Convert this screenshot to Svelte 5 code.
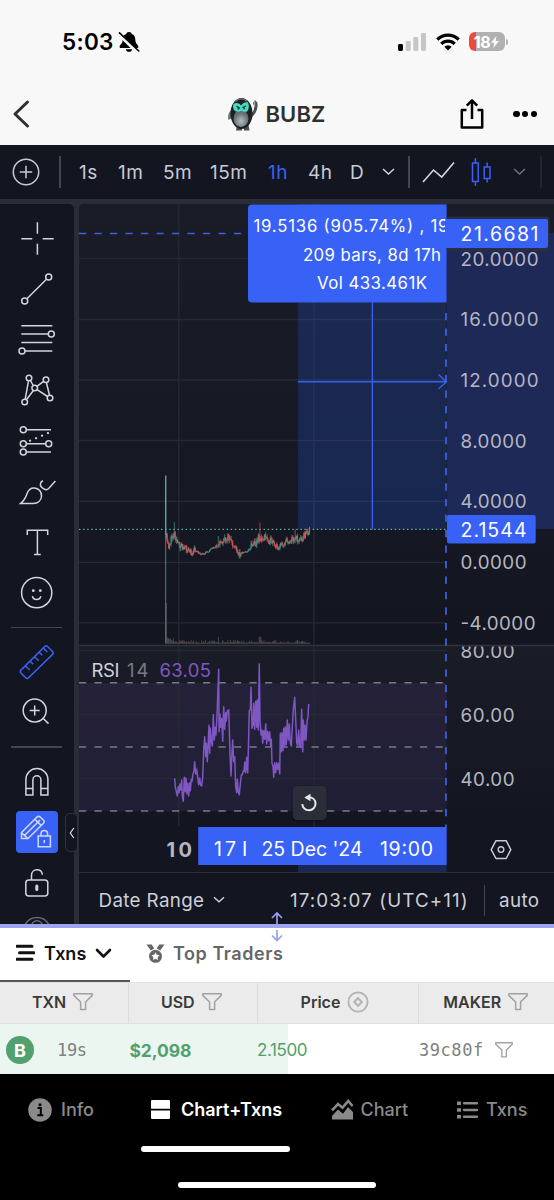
<script>
  const intervals = ['1s', '1m', '5m', '15m', '1h', '4h', 'D'];

  const priceLabels = [
    { t: '20.0000', y: 265.6, w: 77 },
    { t: '16.0000', y: 326.4, w: 77 },
    { t: '12.0000', y: 387.3, w: 77 },
    { t: '8.0000', y: 447.6, w: 65 },
    { t: '4.0000', y: 508.3, w: 65 },
    { t: '0.0000', y: 569.1, w: 65 },
    { t: '-4.0000', y: 629.8, w: 74 }
  ];
  const rsiLabels = [
    { t: '80.00', y: 657.7 },
    { t: '60.00', y: 721.9 },
    { t: '40.00', y: 786 }
  ];
  const priceGrid = [258.5, 319.5, 380, 440.5, 501.3, 562.3, 622.8];
  const rsiGrid = [650.5, 714.7, 778.7];
  const rsiBands = [682.8, 747, 811];

  // price outline, thirds of a pixel from the chart origin (150, 460)
  const keys = [
    [48, 228], [55, 262], [60, 248], [66, 232], [73, 218], [80, 240], [85, 255], [95, 256], [100, 266],
    [112, 268], [120, 278], [135, 272], [150, 282], [165, 280], [180, 270], [195, 262], [205, 247],
    [215, 248], [225, 240], [237, 230], [245, 255], [255, 260], [262, 283], [275, 279], [295, 272],
    [305, 252], [318, 248], [325, 234], [335, 240], [345, 230], [355, 240], [365, 245], [375, 262],
    [390, 258], [405, 245], [420, 242], [436, 232], [445, 240], [455, 235], [463, 225], [470, 220], [478, 210]
  ];
  let seed = 11;
  const rnd = () => (seed = (seed * 16807) % 2147483647) / 2147483647;
  const at = (x) => {
    let i = 1;
    while (i < keys.length - 1 && keys[i][0] < x) i++;
    const [x0, y0] = keys[i - 1];
    const [x1, y1] = keys[i];
    return y0 + ((y1 - y0) * (x - x0)) / (x1 - x0);
  };
  const candles = [];
  const volumes = [];
  let prev = at(49);
  for (let x = 49; x < 479; x += 2.4) {
    const calm = (x > 135 && x < 200) || (x > 270 && x < 300);
    const amp = calm ? 6 : 20;
    const next = at(x) + (rnd() - 0.5) * amp;
    const up = next < prev;
    let hi = Math.min(prev, next) - rnd() * amp * 0.5;
    const lo = Math.max(prev, next) + rnd() * amp * 0.5;
    let spike = false;
    if (Math.abs(x - 73) < 1.2) hi = 187;
    if (Math.abs(x - 330) < 1.3) { hi = 188; spike = true; }
    if (Math.abs(x - 206) < 1.3) hi = 228;
    if (Math.abs(x - 436) < 1.3) { hi = 208; spike = true; }
    candles.push({
      x: 150 + x / 3, hi: 460 + hi / 3, lo: 460 + lo / 3,
      top: 460 + Math.min(prev, next) / 3, h: Math.max(0.8, Math.abs(next - prev) / 3),
      c: up && !spike ? '#459c86' : '#e84f5a'
    });
    let v = 0.8 + rnd() * rnd() * 4;
    if (x < 80) v += (80 - x) / 6;
    if (Math.abs(x - 206) < 1.3) v = 7;
    if (Math.abs(x - 330) < 3) v = 7;
    volumes.push({ x: 150 + x / 3, v, c: up ? '#3d5553' : '#6b464c' });
    prev = next;
  }

  const rsi = [
    74,415,76,440,79,455,82,468,85,440,87,458,90,432,92,450,95,420,97,468,100,484,103,412,106,455,108,414,111,462,
    113,430,116,468,119,428,121,452,124,418,126,424,129,402,132,392,134,365,137,402,140,388,143,412,146,434,149,414,
    152,436,155,438,158,412,161,330,164,290,167,350,169,310,172,365,174,318,177,256,179,340,181,264,184,305,187,318,
    190,224,193,300,196,262,198,285,201,225,204,145,206,88,207,275,210,222,212,262,215,235,218,304,221,200,224,268,
    227,218,229,244,232,214,236,209,238,262,240,345,243,408,246,335,248,300,251,365,254,350,257,440,260,458,262,418,
    265,455,268,464,271,432,274,405,277,404,280,392,282,395,284,366,287,398,290,352,293,398,296,290,298,212,301,210,
    303,142,306,265,309,255,311,190,314,268,317,184,320,262,322,180,325,270,328,72,330,240,333,285,336,270,338,310,
    341,272,344,298,347,252,350,312,353,274,356,302,359,275,362,322,364,298,366,370,369,378,371,412,374,368,377,398,
    380,368,383,388,386,370,389,402,391,280,394,335,396,278,399,332,401,265,404,322,406,260,409,314,412,240,415,300,
    418,252,421,310,424,318,427,262,430,210,434,172,437,240,440,308,443,318,446,270,449,318,452,320,455,208,458,335,
    460,240,463,300,465,256,468,300,471,245,474,230,476,192
  ];
  let rsiPath = '';
  for (let i = 0; i < rsi.length; i += 2) {
    rsiPath += `${i ? 'L' : 'M'}${(150 + rsi[i] / 3).toFixed(1)} ${(640 + rsi[i + 1] / 3).toFixed(1)}`;
  }
</script>

{#snippet funnel(size)}
  <svg class="funnel" width={size} height={size * 0.87} viewBox="0 0 20 17.4">
    <path d="M.8 .8h18.4v1.6L12.6 9v7.6H7.6V9L.8 2.4z" />
  </svg>
{/snippet}

<div class="phone">
  <div class="status">
    <span class="time">5:03</span>
    <svg class="bell" width="22" height="22" viewBox="0 0 22 22">
      <path d="M11 .9c-1.500 0-2.600.9-2.800 2.200C5.200 4.200 4.600 7 4.600 9.500c0 3.300-3 4.200-3 6.300 0 .8.500 1.200 1.300 1.200h16.200c.8 0 1.300-.4 1.300-1.200 0-2.100-3-3-3-6.300 0-2.500-.6-5.300-3.600-6.400C13.600 1.800 12.500.9 11 .9z" />
      <path d="M7.800 18.200h6.400c-.3 1.600-1.600 2.600-3.200 2.600s-2.900-1-3.200-2.600z" />
      <path d="M.9 3 19 20.800" stroke="#f8f8f8" stroke-width="3.600" />
      <path d="M1.500 1.800 20.800 20" stroke="#000" stroke-width="1.600" stroke-linecap="round" />
    </svg>
    <span class="grow"></span>
    <svg width="29" height="20" viewBox="0 0 29 20">
      <rect x="0" y="12" width="5" height="7" rx="1.400" />
      <g fill="#c6c6c6">
        <rect x="7.700" y="9" width="5" height="10" rx="1.400" />
        <rect x="15.300" y="5" width="5" height="14" rx="1.400" />
        <rect x="23" y="1" width="5" height="18" rx="1.400" />
      </g>
    </svg>
    <svg class="wifi" width="24" height="18" viewBox="0 0 24 18">
      <g fill="none" stroke="#000" stroke-width="3.200">
        <path d="M1.300 6.600a15.200 15.200 0 0 1 21.400 0" />
        <path d="M5.300 10.800a9.500 9.500 0 0 1 13.400 0" />
      </g>
      <path d="M8.300 13.700a5.300 5.300 0 0 1 7.400 0L12 17.400z" />
    </svg>
    <div class="battery"><span>18</span><svg width="8" height="12" viewBox="0 0 8 12"><path fill="#fff" d="M5.500 0 0 6.800h3.300L2.300 12 8 5H4.600z" /></svg></div>
    <i class="nub"></i>
  </div>

  <header>
    <svg width="20" height="30" viewBox="0 0 20 30"><path d="M15.500 3 3 15l12.500 12" fill="none" stroke="#303030" stroke-width="3" stroke-linecap="round" stroke-linejoin="round" /></svg>
    <div class="token">
      <svg width="33" height="36" viewBox="0 0 33 36">
        <defs><radialGradient id="belly" cx=".5" cy=".65"><stop offset="0" stop-color="#b4bcbd" /><stop offset="1" stop-color="#626c6f" /></radialGradient></defs>
        <path d="M23 19c4-2 5.500-5 5-9l-1-3 2-3 2.300 2.500c1 5-.8 11.500-6.300 15z" fill="#4a4f51" />
        <path d="M28.700 5v6" stroke="#b5b8b8" stroke-width="1" />
        <path d="M5.500 14c-3 2-4 6-3 10l3.500-2z" fill="#6c7172" />
        <path d="M11 29h5v5.500h-6zM18 29h4.500l1 5.500h-5.500z" fill="#4b5052" />
        <ellipse cx="15.500" cy="17.500" rx="11" ry="15.500" fill="#1d2123" />
        <path d="M9.500 5.500c3-3.500 8.500-3.500 11.500 0" stroke="#6d7273" stroke-width="1.300" fill="none" />
        <ellipse cx="15" cy="22.500" rx="7.500" ry="8.500" fill="url(#belly)" />
        <path d="M7.500 8c2.500-1.500 5-1.500 7.500 1.500C17 6.500 20 5.500 22 6.500c1.500 3 1 7-1 9-2.500.6-4-.3-6-.8-2 1.300-4 1.300-6 .3C7.300 13.500 6.500 11 7.500 8z" fill="#4adbc5" />
        <path d="m10.500 10.300 3.500 2M20 9.800l-3.500 2M11.500 12.800h1.500M17.500 12.500H19" stroke="#12302e" stroke-width="1.300" />
      </svg>
      <b>BUBZ</b>
    </div>
    <svg class="share" width="26" height="34" viewBox="0 0 26 34"><path d="M7.500 13H2.800v17.500h20.400V13h-4.700M13 22V4M7.800 8.700 13 3.300l5.200 5.400" fill="none" stroke="#000" stroke-width="2.500" stroke-linejoin="round" /></svg>
    <div class="more"><i></i><i></i><i></i></div>
  </header>

  <div class="toolbar">
    <svg width="28" height="28" viewBox="0 0 28 28"><g fill="none" stroke="#c8cad3" stroke-width="1.500"><circle cx="14" cy="14" r="12.700" /><path d="M14 7.800v12.400M7.800 14h12.400" /></g></svg>
    <i class="sep"></i>
    {#each intervals as it}<span class:on={it === '1h'}>{it}</span>{/each}
    <svg width="13" height="8" viewBox="0 0 13 8"><path d="m1 1 5.500 5L12 1" fill="none" stroke="#d5d6de" stroke-width="1.500" /></svg>
    <i class="sep"></i>
    <svg width="33" height="22" viewBox="0 0 33 22"><path d="m1 21 10.500-12 8.200 7L32 1.500" fill="none" stroke="#d5d6de" stroke-width="1.600" /></svg>
    <svg width="21" height="30" viewBox="0 0 21 30"><g fill="none" stroke="#3a60f5" stroke-width="1.500"><path d="M1.500 6h5.700v18.500H1.500zM4.400 1v5M4.400 24.500V29M13.200 10h5.800v11.500h-5.800zM16.100 5.500V10M16.100 21.500v4" /></g></svg>
    <svg width="13" height="8" viewBox="0 0 13 8"><path d="m1 1 5.500 5L12 1" fill="none" stroke="#70737f" stroke-width="1.500" /></svg>
    <i class="sep dim"></i>
  </div>

  <div class="workspace">
    <nav class="tools">
      <div class="slot"><svg viewBox="0 0 44 44"><path d="M6.300 21.700h11M27.700 21.700h11M22.400 5.300v11.400M22.400 26.700v11" /></svg></div>
      <div class="slot"><svg viewBox="0 0 44 44"><circle cx="9.700" cy="33" r="3" /><circle cx="33.700" cy="9" r="3" /><path d="m11.900 30.800 19.600-19.600" /></svg></div>
      <div class="slot"><svg viewBox="0 0 44 44"><path d="M6.300 7.700h31M6.300 16h27M6.300 24.400h31M10 33h27.300" /><circle cx="36.300" cy="16" r="3" /><circle cx="7" cy="33" r="3" /></svg></div>
      <div class="slot"><svg viewBox="0 0 44 44"><g><circle cx="14" cy="9" r="2.800" /><circle cx="31" cy="10.700" r="2.800" /><circle cx="19.700" cy="19" r="2.800" /><circle cx="9.700" cy="33" r="2.800" /><circle cx="35" cy="29" r="2.800" /></g><path d="m13.500 11.800-3.300 18.400M15.400 11.500l2.800 5M21.900 17.300l6.700-4.900M18.400 21.500l-7 9.300M22 20.600l10.600 6.900M31.400 13.500l3.100 12.700" /></svg></div>
      <div class="slot"><svg viewBox="0 0 44 44"><circle cx="8.300" cy="10.700" r="3" /><circle cx="8.300" cy="24.700" r="3" /><circle cx="33.700" cy="24.700" r="3" /><circle cx="8.300" cy="33.100" r="3" /><path d="M11.300 10.700H36M11.300 24.700h19.400M11.300 33.100H36" /><path d="m15 21.700 19-8" stroke-dasharray="0.100 6.400" stroke-linecap="round" stroke-width="2.200" /></svg></div>
      <div class="slot"><svg viewBox="0 0 44 44"><path d="M5.700 33.400c4-3 5.300-6.500 6.600-10.300 1.300-3.500 4-5.300 7.100-5.100 4.300.3 7.400 3.800 7.100 8.200-.3 4.300-3.500 7.200-8.300 7.200zM28 10.700c-3 1.200-3.300 4.300-1.600 6.300 2.300 2.700 5.300 3.600 7.300 1.500l6.700-7.500" /></svg></div>
      <div class="slot"><svg viewBox="0 0 44 44"><path d="M12.300 14V9.300h20.400V14M22.400 9.300v24M19 33.600h6.800" /></svg></div>
      <div class="slot"><svg viewBox="0 0 44 44"><circle cx="21.700" cy="21.700" r="15.100" /><path d="M17.500 25.100c.4 4.400 7.800 4.400 8.200 0" /><g class="solid"><circle cx="18.300" cy="19.700" r="1.400" /><circle cx="25.300" cy="19.700" r="1.400" /></g></svg></div>
      <hr />
      <div class="slot blue"><svg viewBox="0 0 44 44"><path d="M30 6.300a1.600 1.600 0 0 1 2.300 0l5.500 5.500a1.600 1.600 0 0 1 0 2.300L13.300 38a1.600 1.600 0 0 1-2.300 0l-5.300-5.300a1.600 1.600 0 0 1 0-2.300zM10.500 26l4.200 4M15.200 21.200l3 3M19.500 16.800l4.200 4M24.200 12.200l3 3M28.300 8l4 4" /></svg></div>
      <div class="slot"><svg viewBox="0 0 44 44"><circle cx="19.700" cy="20.500" r="11.500" /><path d="M19.700 15.500v10M14.700 20.500h10M28 28.300l5.500 5.300" /></svg></div>
      <hr class="second" />
      <div class="slot"><svg viewBox="0 0 44 44"><path d="M10.900 35V19.500a11 11 0 0 1 22 0V35h-7V19.800a4 4 0 0 0-8 0V35zM10.900 28.600h7M25.900 28.600h7" /></svg></div>
      <div class="slot"><div class="active"><svg viewBox="0 0 42 42"><path d="M5.500 27.500v-6L21 6c1-1 2.200-1 3.200 0l3.300 3.300c1 1 1 2 0 3L12 27.500zM5.500 21.700l6.300 5.700M8.500 24.500 24 9M18.800 8.200l6.300 6.200M22.200 25h12.200v10.800H22.200zM25 25v-2.200a3.300 3.300 0 0 1 6.600 0V25M28.300 29v3" /></svg></div></div>
      <div class="slot"><svg viewBox="0 0 44 44"><rect x="10.800" y="18.900" width="22" height="16" rx="3" /><path d="M16.500 18.900v-4.500c0-7.400 10.800-7.400 10.800-.7" /><path d="M21.800 25v3.600" stroke-width="3" stroke-linecap="round" /></svg></div>
      <div class="slot dimmed"><svg viewBox="0 0 44 44"><path d="M9.500 15c5-11.500 20-11.500 25 0" /><circle cx="22" cy="15" r="5.300" /></svg></div>
      <div class="collapse"><svg width="6" height="12" viewBox="0 0 6 12"><path d="M4.800 1 1.300 6l3.500 5" fill="none" stroke="#d5d6de" stroke-width="1.300" /></svg></div>
    </nav>

    <div class="chart">
      <svg class="plot" width="475" height="668" viewBox="79 204 475 668">
        <defs>
          <linearGradient id="pane" x1="0" y1="0" x2="0" y2="1"><stop offset="0" stop-color="#1a1c27" /><stop offset="1" stop-color="#131621" /></linearGradient>
          <clipPath id="tip"><rect x="248" y="204" width="198.600" height="99" /></clipPath>
          <clipPath id="rsiAxis"><rect x="447" y="646.500" width="107" height="180" /></clipPath>
        </defs>
        <rect x="79" y="204" width="475" height="668" fill="#131621" />
        <rect x="79" y="204" width="475" height="442" fill="url(#pane)" />
        <rect x="79" y="646" width="475" height="180" fill="url(#pane)" />
        <rect x="79" y="683" width="367.500" height="128" fill="#7e57c2" fill-opacity=".12" />
        <g stroke="#272a34" stroke-width="1.300">
          {#each [...priceGrid, ...rsiGrid] as y}<path d="M79 {y}H446" />{/each}
          <path d="M178.800 204V826M314 204V826" />
        </g>
        <path d="M79 645.500H554" stroke="#30323d" stroke-width="1.500" />
        <rect x="298" y="204" width="148.500" height="325.500" fill="#2962ff" fill-opacity=".2" />
        <rect x="447" y="233" width="107" height="296" fill="#1e2958" />
        {#each volumes as v}<rect x={v.x - 0.4} y={643.8 - v.v} width=".8" height={v.v} fill={v.c} />{/each}
        <path d="M166.200 603V644" stroke="#5d5054" stroke-width="1.200" />
        <path d="M79 529.300H446" stroke="#5fae9f" stroke-width="1.300" stroke-dasharray="1.500 2.600" />
        <path d="M165.700 475.500V535" stroke="#4db096" stroke-width="1.400" />
        <path d="M165.600 535V643" stroke="#3a7568" stroke-width="1.200" />
        {#each candles as c}
          <path d="M{c.x} {c.hi}V{c.lo}" stroke={c.c} stroke-width=".7" />
          <rect x={c.x - 0.5} y={c.top} width="1" height={c.h} fill={c.c} />
        {/each}
        {#each rsiBands as y}<path d="M79 {y}H446" stroke="#787a84" stroke-width="1.500" stroke-dasharray="7.200 8.300" />{/each}
        <path d={rsiPath} fill="none" stroke="#7e57c2" stroke-width="1.500" stroke-linejoin="round" />
        <path d="M79 233.500H248" stroke="#3b5fe6" stroke-width="1.500" stroke-dasharray="7.200 8.300" />
        <path d="M446 313V827" stroke="#3e63e8" stroke-width="1.700" stroke-dasharray="7.200 8.300" />
        <g fill="none" stroke="#3560f2" stroke-width="1.400"><path d="M298 381.800H446M372.400 302V529.500M438.500 374.500l8 7.300-8 7.300" /></g>

        <g class="axis">
          {#each priceLabels as p}<text x="460.500" y={p.y} textLength={p.w + 1}>{p.t}</text>{/each}
          <g clip-path="url(#rsiAxis)">{#each rsiLabels as p}<text x="460.500" y={p.y} textLength="54">{p.t}</text>{/each}</g>
        </g>

        <g clip-path="url(#tip)" class="tip">
          <rect x="248" y="204.500" width="210" height="98" rx="4" fill="#3861f6" />
          <text x="253.500" y="232.300" textLength="195">19.5136 (905.74%) , 19</text>
          <text x="303" y="260.500" textLength="138">209 bars, 8d 17h</text>
          <text x="317" y="288.600" textLength="110">Vol 433.461K</text>
        </g>
        <rect x="446.500" y="216.500" width="103" height="34.500" rx="3" fill="#2c2f3e" opacity=".8" />
        <rect x="445" y="219" width="103" height="29" rx="2" fill="#3861f6" />
        <rect x="447" y="515" width="88.700" height="28.500" rx="2" fill="#3861f6" />
        <g class="tag">
          <text x="460.500" y="241" textLength="78">21.6681</text>
          <text x="460.500" y="537" textLength="66">2.1544</text>
        </g>

        <g class="legend">
          <text x="91.500" y="677.400" textLength="28" fill="#d1d3dc">RSI</text>
          <text x="127" y="677.400" textLength="21.500" fill="#787b86">14</text>
          <text x="159.500" y="677.400" textLength="51.500" fill="#7e57c2">63.05</text>
        </g>

        <g>
          <rect x="291.500" y="785.500" width="36" height="37" rx="6" fill="#000" opacity=".2" />
          <rect x="292.700" y="786" width="34" height="34" rx="4.500" fill="#2b2d38" />
          <path d="M308.500 797.300c4 0 7 2.600 7 6.300a6.600 6.600 0 0 1-13.200.3" fill="none" stroke="#e6e7ec" stroke-width="2" />
          <path d="m304.300 797.500 6.200-3.700v7.400z" fill="#e6e7ec" />
        </g>

        <rect x="298" y="864" width="148.500" height="8" fill="#1c2755" />
        <text class="day" x="166.500" y="857" textLength="25.500">10</text>
        <rect x="198.200" y="827" width="248.500" height="38" fill="#3861f6" />
        <g class="date">
          <text x="214" y="856" textLength="22">17</text>
          <text x="242" y="856">I</text>
          <text x="261.500" y="856" textLength="101">25 Dec '24</text>
          <text x="380" y="856" textLength="53">19:00</text>
        </g>
        <path d="m496 840.700h10.200l4.600 8.900-4.600 8.900H496l-4.800-8.900z" fill="none" stroke="#c8cad3" stroke-width="1.500" stroke-linejoin="round" />
        <circle cx="501" cy="849.600" r="2.800" fill="none" stroke="#c8cad3" stroke-width="1.400" />
      </svg>
      <div class="range">
        <span class="dr">Date Range</span>
        <svg width="12" height="8" viewBox="0 0 12 8"><path d="m1 1.300 5 4.400 5-4.400" fill="none" stroke="#d0d2da" stroke-width="1.400" /></svg>
        <span class="clock">17:03:07 (UTC+11)</span>
        <i></i>
        <span class="auto">auto</span>
      </div>
    </div>
  </div>

  <div class="splitter">
    <svg width="14" height="32" viewBox="0 0 14 32"><g fill="none" stroke="#98a0ee" stroke-width="1.700"><path d="M7 13V2.500M2 7l5-5 5 5M7 19v10M2 24.500l5 5 5-5" /></g></svg>
  </div>

  <div class="tabs">
    <div class="tab current">
      <svg width="19" height="18" viewBox="0 0 19 18"><path d="M1 2.300h15M3.500 8.700H18M1 15.300h15" stroke="#111" stroke-width="3" stroke-linecap="round" /></svg>
      <span>Txns</span>
      <svg class="chev" width="17" height="11" viewBox="0 0 17 11"><path d="m2 2 6.500 6.500L15 2" fill="none" stroke="#111" stroke-width="2.600" stroke-linecap="round" stroke-linejoin="round" /></svg>
    </div>
    <div class="tab">
      <svg width="19" height="19" viewBox="0 0 19 19"><path d="M.5.500h5.200l2.600 4-3.500 2zM18.500.500h-5.200l-2.600 4 3.500 2z" fill="#666" /><circle cx="9.500" cy="12.300" r="6.500" fill="#666" /><path d="m9.500 8.200 1.250 2.600 2.850.4-2.050 2 .5 2.800-2.550-1.350L6.950 16l.5-2.800-2.050-2 2.850-.4z" fill="#fff" /></svg>
      <span class="tt">Top Traders</span>
    </div>
  </div>

  <div class="thead">
    <div><span>TXN</span>{@render funnel(20)}</div>
    <div><span>USD</span>{@render funnel(20)}</div>
    <div><span>Price</span><svg width="22" height="22" viewBox="0 0 22 22"><g fill="none" stroke="#b3b3b3"><circle cx="11" cy="11" r="9.600" stroke-width="1.800" /><path d="m11 7.200 3.800 3.800-3.800 3.800L7.200 11z" stroke-width="2" /></g></svg></div>
    <div><span>MAKER</span>{@render funnel(20)}</div>
  </div>
  <div class="row">
    <div class="badge">B</div>
    <span class="age">19s</span>
    <span class="usd">$2,098</span>
    <span class="price">2.1500</span>
    <span class="maker">39c80f</span>
    {@render funnel(18)}
  </div>

  <footer>
    <div class="menu">
      <svg width="24" height="24" viewBox="0 0 24 24"><circle cx="12" cy="12" r="11.800" fill="#8a8a8a" /><path d="M9.500 10h3.300v7M9.300 17.300h6" stroke="#000" stroke-width="2" fill="none" /><circle cx="12" cy="6.700" r="1.500" /></svg>
      <span>Info</span>
      <svg width="19" height="19" viewBox="0 0 19 19"><path d="M1 0h17a1 1 0 0 1 1 1v7.700H0V1a1 1 0 0 1 1-1zM0 10.600h19V18a1 1 0 0 1-1 1H1a1 1 0 0 1-1-1z" fill="#fff" /></svg>
      <b>Chart+Txns</b>
      <svg width="23" height="21" viewBox="0 0 23 21"><path d="m1 11.300 6-6.300 4.500 3.700L17.300 2 21.500 7" fill="none" stroke="#8a8a8a" stroke-width="2.600" /><path d="M1 20.500V17l6-6.500 5 4.200 5-6.700 5 5v7.500z" fill="#8a8a8a" /></svg>
      <span>Chart</span>
      <svg width="21" height="18" viewBox="0 0 21 18"><path d="M0 2.200h4M0 9h4M0 15.800h4" stroke="#8a8a8a" stroke-width="3.600" /><path d="M7 2.200h13M7 9h13M7 15.800h13" stroke="#8a8a8a" stroke-width="2.400" stroke-linecap="round" /></svg>
      <span>Txns</span>
    </div>
    <i class="underline"></i>
    <i class="home"></i>
  </footer>
</div>

<style>
  :global(body) { margin: 0; background: #f8f8f8; }
  .phone { width: 554px; height: 1200px; overflow: hidden; display: flex; flex-direction: column; background: #f8f8f8; font-family: Inter, sans-serif; }
  .phone > * { flex: none; box-sizing: border-box; }
  svg { display: block; flex: none; }
  span, b { white-space: nowrap; }

  .status { height: 83px; display: flex; align-items: center; padding: 0 49.500px 0 62px; }
  .time { font-size: 22.500px; font-weight: 600; width: 56px; letter-spacing: .3px; }
  .grow { flex: 1; }
  .wifi { margin: 0 9px 0 9px; }
  .battery { width: 36px; height: 19px; border-radius: 6px; background: linear-gradient(90deg, #ec4b3c 7px, #b1b1b1 7px); color: #fff; font-size: 16px; font-weight: 700; display: flex; align-items: center; justify-content: center; gap: 1px; }
  .battery span { letter-spacing: -.3px; }
  .nub { width: 2px; height: 6px; background: #b1b1b1; border-radius: 0 2px 2px 0; margin-left: 1px; margin-right: -3px; }

  header { height: 62px; display: flex; align-items: center; padding: 0 17px 0 12px; }
  .token { flex: 1; display: flex; align-items: center; padding-left: 194px; gap: 6.500px; }
  .token b { font-size: 22px; font-weight: 600; color: #303030; letter-spacing: .1px; }
  .share { margin-right: 28px; }
  .more { display: flex; gap: 2.200px; }
  .more i { width: 6.400px; height: 6.400px; border-radius: 50%; background: #000; }

  .toolbar { height: 59px; padding: 0 0 0 12px; border-bottom: 5px solid #2a2c38; background: #131621; display: grid; grid-template-columns: 47px 20px 39px 45px 47px 58px 40px 42px 32px 26px 14px 49px 42px 27px 14px; align-items: center; color: #c8cad3; font-size: 19px; }
  .toolbar span { letter-spacing: .5px; }
  .toolbar .on { color: #3a60f5; }
  .toolbar .sep { width: 1.500px; height: 32px; background: #43454f; }
  .toolbar .dim { background: #22242f; }

  .workspace { height: 720px; display: flex; gap: 5.500px; background: #2a2c38; overflow: hidden; }
  .tools { width: 73.500px; flex: none; position: relative; background: #131621; border-radius: 0 5px 0 0; padding-top: 9.600px; box-sizing: border-box; }
  .slot { height: 50.650px; display: flex; align-items: center; justify-content: center; }
  .slot svg { width: 44px; height: 44px; fill: none; stroke: #d3d5dd; stroke-width: 1.500; }
  .slot .solid { fill: #d3d5dd; stroke: none; }
  .slot.blue svg { stroke: #3a60f5; }
  .slot.dimmed svg { stroke: #666974; }
  .tools hr { width: 51px; height: 1.500px; border: 0; background: #43454f; margin: 8px 0 8px 11px; }
  .tools hr.second { margin: 8.500px 0 8.700px 11px; }
  .active { width: 42px; height: 42px; border-radius: 4px; background: #3861f6; }
  .active svg { width: 42px; height: 42px; stroke: #cfd9ff; }
  .collapse { position: absolute; left: 65px; top: 609px; width: 11px; height: 37px; border: 1px solid #30323d; border-radius: 5px; background: #131621; display: flex; align-items: center; justify-content: center; }

  .chart { width: 475px; flex: none; background: #131621; border-radius: 5px 0 0 0; overflow: hidden; }
  .plot text { font-family: Inter, sans-serif; }
  .axis text { font-size: 18.800px; fill: #b4b6c0; }
  .tip text { font-size: 16.800px; fill: #fff; }
  .tag text, .date text { font-size: 19.500px; fill: #fff; }
  .legend text { font-size: 18.500px; }
  .day { font-size: 20px; font-weight: 700; fill: #b4b6c0; }
  .range { height: 52px; box-sizing: border-box; border-top: 1px solid #2c2e39; display: flex; align-items: center; color: #cdcfd7; font-size: 18.800px; padding: 3px 0 0 19.500px; }
  .dr { width: 114.500px; letter-spacing: .35px; }
  .clock { width: 194px; margin-left: 65px; letter-spacing: 1.100px; }
  .range i { width: 1.500px; height: 31px; background: #43454f; margin-left: -.5px; }
  .auto { margin-left: 14px; letter-spacing: .4px; }

  .splitter { height: 4px; background: #9ea4ee; position: relative; z-index: 1; }
  .splitter svg { position: absolute; left: 270px; top: -13px; }

  .tabs { height: 54px; background: #fff; display: flex; font-weight: 600; font-size: 18px; color: #666; }
  .tab { display: flex; align-items: center; padding-bottom: 4px; box-sizing: border-box; padding-left: 16px; }
  .tab span { margin-left: 9px; }
  .tab .tt { letter-spacing: .55px; margin-left: 8px; }
  .tab.current { width: 130px; color: #111; border-bottom: 2.500px solid #555; padding-bottom: 2px; }
  .chev { margin-left: 9px; }

  .thead { height: 42px; background: #ebebeb; display: grid; grid-template-columns: 129px 128.500px 161px 1fr; box-sizing: border-box; border-top: 1px solid #e2e2e2; border-bottom: 1px solid #e0e0e0; font-weight: 600; font-size: 16px; color: #3a3a3a; }
  .thead div { display: flex; align-items: center; justify-content: center; gap: 7px; border-right: 1.500px solid #dcdcdc; box-sizing: border-box; padding: 0 3px 2px 0; }
  .thead div:nth-child(3) { padding-right: 5px; }
  .thead div:last-child { border: 0; padding-right: 1px; }
  .funnel { fill: none; stroke: #a2a2a2; stroke-width: 1.500; stroke-linejoin: round; }

  .row { height: 50px; background: linear-gradient(90deg, #ecf6f0 288px, #fff 288px); display: grid; grid-template-columns: 51px 72.500px 128.500px 161px 76px 20px; align-items: center; padding: 2px 0 0 6px; color: #52a06d; }
  .badge { width: 28px; height: 28px; border-radius: 50%; background: #52a06d; color: #fff; font-weight: 700; font-size: 18px; display: grid; place-items: center; }
  .age, .maker { font: 17px "DejaVu Sans Mono", monospace; color: #808080; }
  .age { letter-spacing: -.3px; }
  .maker { letter-spacing: .55px; }
  .usd { font-weight: 700; font-size: 17.500px; letter-spacing: -.1px; }
  .price { font-size: 17px; letter-spacing: -.4px; margin-left: -1px; }

  footer { height: 126px; background: #000; display: flex; flex-direction: column; align-items: center; }
  .menu { width: 554px; height: 71px; box-sizing: border-box; display: grid; grid-template-columns: 33px 89.500px 30.500px 150px 29.500px 96px 29.500px 60px; padding-left: 28px; align-items: center; color: #8a8a8a; font-size: 18px; font-weight: 500; }
  .menu b { color: #fff; font-weight: 600; }
  .underline { width: 149px; height: 5.500px; border-radius: 3px; background: #fff; margin: 1px 0 0 -123px; }
  .home { width: 198px; height: 6px; border-radius: 3px; background: #fff; margin-top: 30.500px; }
</style>
